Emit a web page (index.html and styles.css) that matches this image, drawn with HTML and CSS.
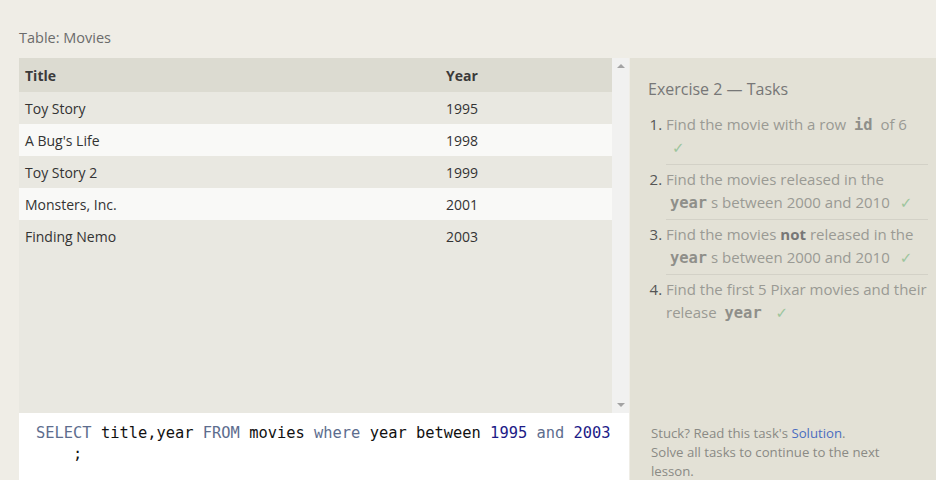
FILE: index.html
```html
<!DOCTYPE html>
<html>
<head>
<meta charset="utf-8">
<link rel="stylesheet" href="styles.css">
</head>
<body>
<div class="caption">Table: Movies</div>
<div class="main">
  <div class="left">
    <div class="table-wrap">
      <div class="table-area">
        <table class="movies">
          <thead>
            <tr><th class="c-title">Title</th><th>Year</th></tr>
          </thead>
          <tbody>
            <tr><td>Toy Story</td><td>1995</td></tr>
            <tr class="alt"><td>A Bug's Life</td><td>1998</td></tr>
            <tr><td>Toy Story 2</td><td>1999</td></tr>
            <tr class="alt"><td>Monsters, Inc.</td><td>2001</td></tr>
            <tr><td>Finding Nemo</td><td>2003</td></tr>
          </tbody>
        </table>
      </div>
      <div class="scrollbar">
        <span class="arrow up"></span>
        <span class="arrow down"></span>
      </div>
    </div>
    <div class="editor">
      <div class="code-line"><span class="kw">SELECT</span> title,year <span class="kw">FROM</span> movies <span class="kw">where</span> year between <span class="num">1995</span> <span class="kw">and</span> <span class="num">2003</span></div>
      <div class="code-line indent">;</div>
    </div>
  </div>
  <div class="panel">
    <h2 class="panel-title">Exercise 2 — Tasks</h2>
    <ol class="tasks">
      <li>Find the movie with a row <code>id</code> of 6 <span class="check">✓</span></li>
      <li>Find the movies released in the <code>year</code>s between 2000 and 2010 <span class="check">✓</span></li>
      <li>Find the movies <b>not</b> released in the <code>year</code>s between 2000 and 2010 <span class="check">✓</span></li>
      <li>Find the first 5 Pixar movies and their release <code>year</code> <span class="check">✓</span></li>
    </ol>
    <div class="footer">
      <p>Stuck? Read this task's <a class="link">Solution</a>.</p>
      <p>Solve all tasks to continue to the next lesson.</p>
    </div>
  </div>
</div>
</body>
</html>
```
FILE: styles.css
```css
html, body {
  margin: 0;
  padding: 0;
  background: #efede6;
  font-family: "Open Sans", "DejaVu Sans", sans-serif;
  overflow: hidden;
}
.caption {
  height: 58px;
  box-sizing: border-box;
  padding: 28px 0 0 19px;
  font-size: 14.5px;
  line-height: 20px;
  color: #6b6b6b;
}
.main {
  display: flex;
  height: 422px;
}
.left {
  width: 610px;
  margin-left: 19px;
  display: flex;
  flex-direction: column;
}
.table-wrap {
  display: flex;
  height: 355px;
  background: #e9e8e1;
}
.table-area {
  flex: 1;
}
.movies {
  width: 100%;
  border-collapse: collapse;
  font-size: 14px;
  color: #333;
}
.movies th {
  text-align: left;
  font-weight: 700;
  background: #dcdbd1;
  height: 34px;
  padding: 0 6px;
  color: #3a3a3a;
}
.movies .c-title {
  width: 409px;
}
.movies td {
  height: 32px;
  box-sizing: border-box;
  padding: 0 6px;
}
.movies tr.alt td {
  background: #f9f9f7;
}
.scrollbar {
  width: 17px;
  background: #f1f1f0;
  position: relative;
}
.arrow {
  position: absolute;
  left: 5px;
  width: 0;
  height: 0;
  border-left: 4px solid transparent;
  border-right: 4px solid transparent;
}
.arrow.up {
  top: 6px;
  border-bottom: 4px solid #a3a3a3;
}
.arrow.down {
  bottom: 6px;
  border-top: 4px solid #a3a3a3;
}
.editor {
  flex: 1;
  background: #ffffff;
  padding: 10px 0 0 17px;
  font-family: "DejaVu Sans Mono", "Liberation Mono", monospace;
  font-size: 15.4px;
  line-height: 21px;
  color: #111;
}
.code-line.indent {
  padding-left: 37px;
}
.kw {
  color: #5d6d8e;
}
.num {
  color: #1d1b87;
}
.panel {
  flex: 1;
  margin-left: 1px;
  background: #e3e1d6;
  padding: 0 8px 0 18px;
  display: flex;
  flex-direction: column;
}
.panel-title {
  margin: 20px 0 10px;
  font-size: 16px;
  font-weight: 400;
  line-height: 22px;
  color: #777;
}
.tasks {
  margin: 0;
  padding: 0 0 0 18px;
  font-size: 15px;
  line-height: 23px;
  color: #9a9a94;
}
.tasks li {
  padding: 3px 0 5px;
  border-bottom: 1px solid #d3d1c7;
}
.tasks li:last-child {
  border-bottom: none;
}
.tasks li::marker {
  color: #555;
}
.tasks code {
  font-family: "DejaVu Sans Mono", "Liberation Mono", monospace;
  font-weight: 700;
  font-size: 15.4px;
  line-height: 1;
  color: #8f8f8a;
  margin: 0 4px;
}
.tasks b {
  color: #777;
}
.check {
  color: #9dc59d;
  margin-left: 6px;
}
.footer {
  margin-top: auto;
  margin-bottom: -1px;
  padding: 0 30px 0 3px;
  font-size: 13.2px;
  line-height: 19px;
  color: #8a8a85;
}
.footer p {
  margin: 0;
}
.link {
  color: #4b6dc0;
}
```
